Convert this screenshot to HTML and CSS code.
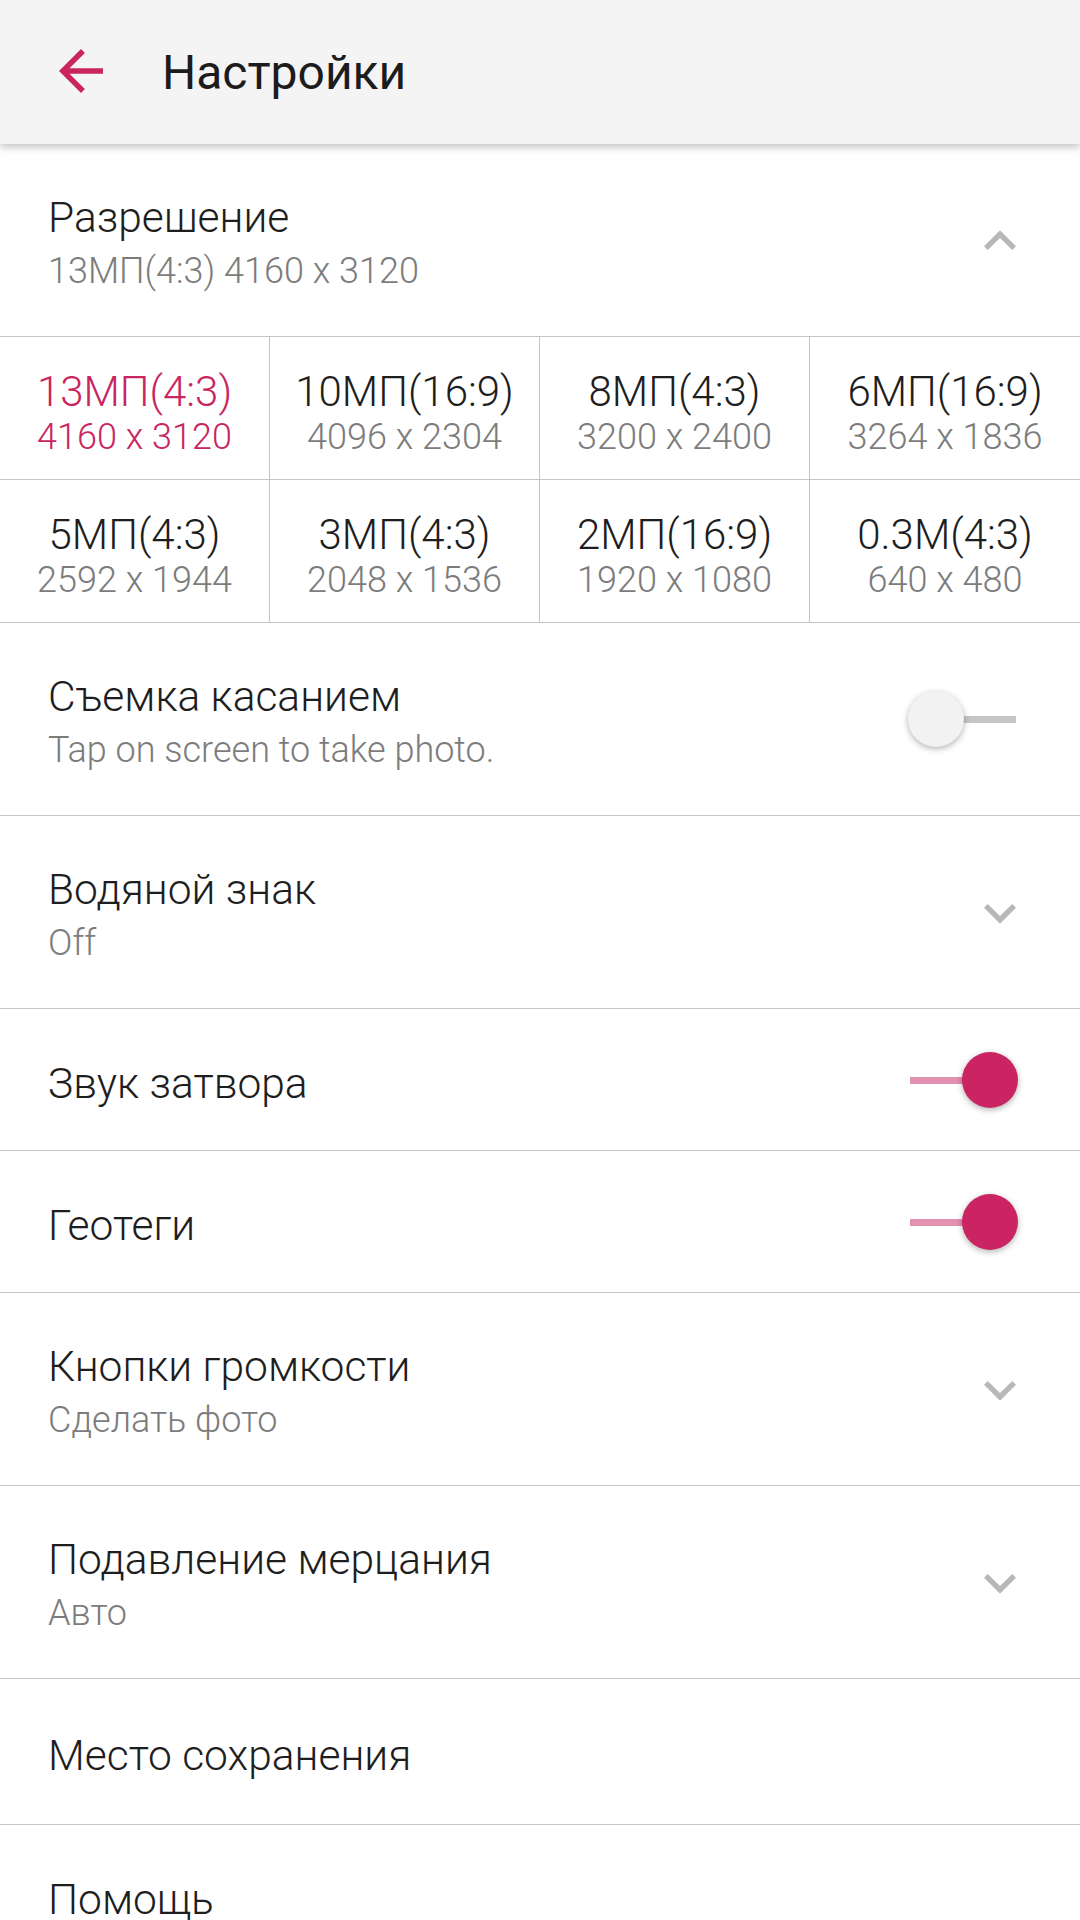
FILE: index.html
```html
<!DOCTYPE html>
<html lang="ru">

<head>
    <meta charset="UTF-8">
    <meta name="viewport" content="width=device-width, initial-scale=1.0">
    <title>Настройки</title>
    <link rel="stylesheet" href="styles.css">
</head>

<body>
    <header class="appbar">
        <svg class="back" viewBox="0 0 24 24">
            <path d="M20 11H7.83l5.59-5.59L12 4l-8 8 8 8 1.41-1.41L7.83 13H20v-2z" />
        </svg>
        <h1>Настройки</h1>
    </header>

    <div class="pref two-line open">
        <div class="pref-text">
            <div class="title">Разрешение</div>
            <div class="summary">13МП(4:3) 4160 x 3120</div>
        </div>
        <svg class="chevron" viewBox="0 0 24 24">
            <path d="M12 8l-6 6 1.41 1.41L12 10.83l4.59 4.58L18 14z" />
        </svg>
    </div>

    <div class="res-grid">
        <div class="cell selected"><span class="mp">13МП(4:3)</span><span class="px">4160 x 3120</span></div>
        <div class="cell"><span class="mp">10МП(16:9)</span><span class="px">4096 x 2304</span></div>
        <div class="cell"><span class="mp">8МП(4:3)</span><span class="px">3200 x 2400</span></div>
        <div class="cell"><span class="mp">6МП(16:9)</span><span class="px">3264 x 1836</span></div>
        <div class="cell"><span class="mp">5МП(4:3)</span><span class="px">2592 x 1944</span></div>
        <div class="cell"><span class="mp">3МП(4:3)</span><span class="px">2048 x 1536</span></div>
        <div class="cell"><span class="mp">2МП(16:9)</span><span class="px">1920 x 1080</span></div>
        <div class="cell"><span class="mp">0.3М(4:3)</span><span class="px">640 x 480</span></div>
    </div>

    <div class="pref two-line">
        <div class="pref-text">
            <div class="title">Съемка касанием</div>
            <div class="summary">Tap on screen to take photo.</div>
        </div>
        <div class="switch">
            <div class="track"></div>
            <div class="thumb"></div>
        </div>
    </div>

    <div class="pref two-line">
        <div class="pref-text">
            <div class="title">Водяной знак</div>
            <div class="summary">Off</div>
        </div>
        <svg class="chevron" viewBox="0 0 24 24">
            <path d="M16.59 8.59L12 13.17 7.41 8.59 6 10l6 6 6-6z" />
        </svg>
    </div>

    <div class="pref">
        <div class="pref-text">
            <div class="title">Звук затвора</div>
        </div>
        <div class="switch on">
            <div class="track"></div>
            <div class="thumb"></div>
        </div>
    </div>

    <div class="pref">
        <div class="pref-text">
            <div class="title">Геотеги</div>
        </div>
        <div class="switch on">
            <div class="track"></div>
            <div class="thumb"></div>
        </div>
    </div>

    <div class="pref two-line">
        <div class="pref-text">
            <div class="title">Кнопки громкости</div>
            <div class="summary">Сделать фото</div>
        </div>
        <svg class="chevron" viewBox="0 0 24 24">
            <path d="M16.59 8.59L12 13.17 7.41 8.59 6 10l6 6 6-6z" />
        </svg>
    </div>

    <div class="pref two-line">
        <div class="pref-text">
            <div class="title">Подавление мерцания</div>
            <div class="summary">Авто</div>
        </div>
        <svg class="chevron" viewBox="0 0 24 24">
            <path d="M16.59 8.59L12 13.17 7.41 8.59 6 10l6 6 6-6z" />
        </svg>
    </div>

    <div class="pref tall">
        <div class="pref-text">
            <div class="title">Место сохранения</div>
        </div>
    </div>

    <div class="pref">
        <div class="pref-text">
            <div class="title">Помощь</div>
        </div>
    </div>
</body>

</html>
```

FILE: styles.css
```css
body {
    font-family: Roboto, "Noto Sans", sans-serif;
    background-color: #ffffff;
    color: #212121;
    margin: 0;
    padding: 0;
}

.appbar {
    position: relative;
    z-index: 2;
    height: 144px;
    display: flex;
    align-items: center;
    background-color: #f4f4f4;
    box-shadow: 0 3px 8px rgba(0, 0, 0, 0.25);
}

.appbar .back {
    width: 66px;
    height: 66px;
    margin-left: 48px;
    margin-top: -2px;
    fill: #c9255f;
}

.appbar h1 {
    margin: 0 0 0 48px;
    font-size: 48px;
    font-weight: 400;
    color: #1c1c1c;
}

.pref {
    box-sizing: border-box;
    height: 142px;
    display: flex;
    align-items: center;
    padding: 8px 48px 0;
    border-bottom: 1px solid #c4c4c4;
}

.pref.two-line {
    height: 193px;
}

.pref.tall {
    height: 146px;
}

.pref.open {
    height: 192px;
    border-bottom: none;
}

.pref-text {
    flex: 1;
}

.title {
    font-size: 42.5px;
    font-weight: 300;
    line-height: 50px;
    color: #1e1e1e;
}

.summary {
    font-size: 36px;
    font-weight: 300;
    line-height: 50px;
    margin-top: 3px;
    color: #7c7c7c;
}

.chevron {
    width: 64px;
    height: 64px;
    margin-top: -6px;
    fill: #b8b8b8;
}

.res-grid {
    display: grid;
    grid-template-columns: repeat(4, 1fr);
    border-top: 1px solid #c4c4c4;
}

.res-grid .cell {
    box-sizing: border-box;
    height: 143px;
    padding-top: 12px;
    display: flex;
    flex-direction: column;
    align-items: center;
    justify-content: center;
    border-bottom: 1px solid #c4c4c4;
    border-right: 1px solid #c4c4c4;
}

.res-grid .cell:nth-child(4n) {
    border-right: none;
}

.cell .mp {
    font-size: 42px;
    font-weight: 300;
    line-height: 46px;
    color: #1e1e1e;
}

.cell .px {
    font-size: 36px;
    font-weight: 300;
    line-height: 44px;
    color: #7c7c7c;
}

.cell.selected .mp,
.cell.selected .px {
    color: #c9255f;
}

.switch {
    position: relative;
    width: 110px;
    height: 56px;
    margin-right: 14px;
    margin-top: -8px;
}

.switch .track {
    position: absolute;
    left: 2px;
    right: 2px;
    top: 25px;
    height: 7px;
    background-color: #c6c6c6;
}

.switch .thumb {
    position: absolute;
    left: 0;
    top: 0;
    width: 56px;
    height: 56px;
    border-radius: 50%;
    background-color: #f2f2f2;
    box-shadow: 0 2px 6px rgba(0, 0, 0, 0.3);
}

.switch.on .track {
    background-color: #e391b1;
}

.switch.on .thumb {
    left: auto;
    right: 0;
    background-color: #cb2462;
}
```
